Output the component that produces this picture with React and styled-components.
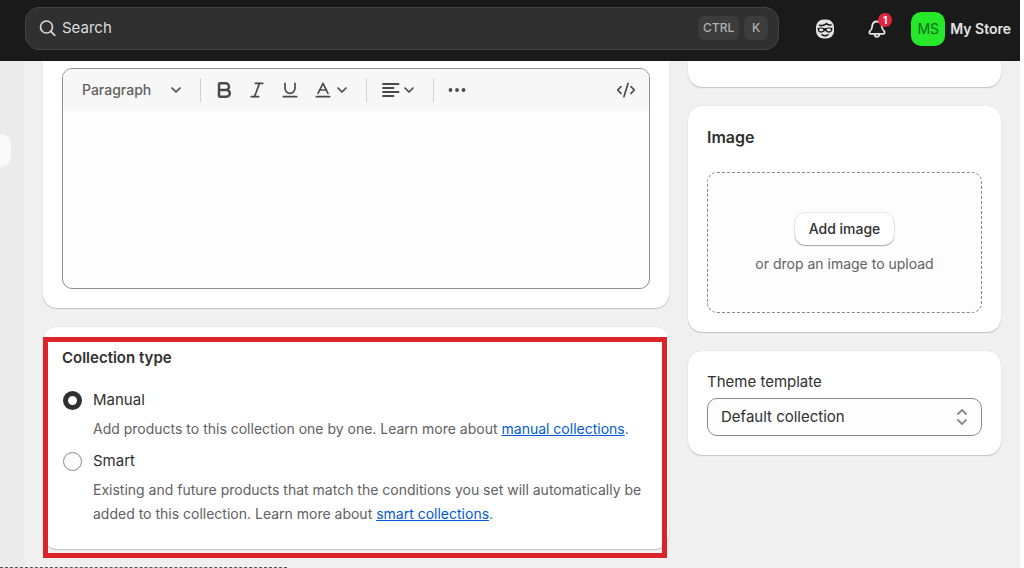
import { useState } from "react";
import styled, { createGlobalStyle } from "styled-components";
import { Baseline, Bold, CodeXml, Italic, Underline } from "lucide-react";

const GlobalStyle = createGlobalStyle`
  * {
    box-sizing: border-box;
  }

  body {
    margin: 0;
    background: #fff;
    color: #303030;
    font-family: Inter, "Liberation Sans", sans-serif;
    font-size: 15px;
    font-optical-sizing: none;
    line-height: 24px;
    overflow: hidden;
  }

  button,
  input,
  select,
  textarea {
    font: inherit;
    font-optical-sizing: none;
    color: inherit;
  }
`;

const Shell = styled.div`
  display: flex;
  flex-direction: column;
  height: 100vh;
  margin-right: 4px;
  background: #f0f0f0;
`;

/* top bar */

const TopBar = styled.header`
  display: flex;
  align-items: center;
  flex: none;
  height: 61px;
  padding: 0 9px 4px 25px;
  background: #1a1a1a;
  color: #e3e3e3;
`;

const SearchBox = styled.label`
  display: flex;
  align-items: center;
  flex: 1;
  gap: 5px;
  height: 43px;
  padding: 0 10px 1px 13px;
  border: 1px solid #444;
  border-radius: 14px;
  background: #303030;
`;

const SearchInput = styled.input`
  flex: 1;
  min-width: 0;
  padding: 0;
  border: 0;
  outline: 0;
  background: transparent;
  font-size: 15px;

  &::placeholder {
    color: #dcdcdc;
    opacity: 1;
  }
`;

const Key = styled.kbd`
  padding: 0 5px;
  min-width: 24px;
  border-radius: 6px;
  background: #3c3c3c;
  color: #b0b0b0;
  font: 500 12px/24px Inter, "Liberation Sans", sans-serif;
  text-align: center;
`;

const Actions = styled.div`
  display: flex;
  align-items: center;
  gap: 24px;
  padding-left: 32px;
`;

const IconButton = styled.button`
  position: relative;
  display: grid;
  place-items: center;
  width: 28px;
  height: 28px;
  padding: 0;
  border: 0;
  background: transparent;
`;

const Badge = styled.span`
  position: absolute;
  top: -2px;
  right: -1px;
  width: 14px;
  height: 14px;
  border-radius: 50%;
  background: #e0243f;
  color: #fff;
  font-size: 10px;
  font-weight: 700;
  line-height: 14px;
`;

const StoreButton = styled.button`
  display: flex;
  align-items: center;
  gap: 5px;
  margin-left: -4px;
  padding: 0;
  border: 0;
  background: transparent;
  font-size: 14px;
  font-weight: 600;
  white-space: nowrap;
`;

const Avatar = styled.span`
  width: 34px;
  height: 34px;
  border-radius: 10px;
  background: #25e82b;
  color: #136c1b;
  font-size: 14px;
  font-weight: 400;
  line-height: 34px;
`;

/* page */

const Body = styled.div`
  display: flex;
  flex: 1;
  min-height: 0;
`;

const NavRail = styled.nav`
  flex: none;
  width: 24px;
  padding-top: 73px;
  background: #ebebeb;
`;

const NavCurrent = styled.div`
  width: 11px;
  height: 33px;
  border-radius: 0 10px 10px 0;
  background: #fafafa;
`;

const Columns = styled.main`
  display: grid;
  grid-template-columns: 2fr 1fr;
  align-items: start;
  flex: 1;
  gap: 19px;
  padding: 0 19px;
`;

const Column = styled.div`
  display: flex;
  flex-direction: column;
  gap: 19px;
  min-width: 0;
`;

const Card = styled.section`
  position: relative;
  padding: ${({ $cut }) => ($cut ? "7px 19px 19px" : "19px")};
  border-radius: ${({ $cut }) => ($cut ? "0 0 14px 14px" : "14px")};
  background: #fff;
  box-shadow: 0 1px 1px rgba(0, 0, 0, 0.18), 0 0 1px rgba(0, 0, 0, 0.16);
`;

const CardTitle = styled.h2`
  margin: 0;
  font-size: ${({ $large }) => ($large ? "16px" : "15px")};
  font-weight: 600;
  line-height: 24px;
`;

/* description editor */

const Editor = styled.div`
  overflow: hidden;
  border: 1px solid #8f8f8f;
  border-radius: 10px;
  background: #fdfdfd;
`;

const Toolbar = styled.div`
  display: flex;
  align-items: center;
  height: 42px;
  padding: 0 13px 0 19px;
  background: #f7f7f7;
  color: #4a4a4a;
`;

const Tool = styled.button`
  display: flex;
  align-items: center;
  justify-content: center;
  gap: 4px;
  min-width: 20px;
  height: 28px;
  margin-right: 13px;
  padding: 0;
  border: 0;
  background: transparent;
`;

const BlockTool = styled(Tool)`
  gap: 20px;
  margin-right: 19px;
  font-size: 14px;
  font-weight: 500;
  color: #616161;
`;

const MenuTool = styled(Tool)`
  margin-right: 19px;
`;

const CodeTool = styled(Tool)`
  margin: 0 0 0 auto;
`;

const Divider = styled.span`
  width: 1px;
  height: 24px;
  margin-right: 13px;
  background: #d0d0d0;
`;

const EditorText = styled.textarea`
  display: block;
  width: 100%;
  height: 177px;
  padding: 12px 19px;
  border: 0;
  outline: 0;
  resize: none;
  background: transparent;
`;

/* collection type */

const Highlight = styled.div`
  position: absolute;
  inset: 10px 2px -9px 0;
  border: 5px solid #dc2329;
  pointer-events: none;
`;

const Options = styled.div`
  display: grid;
  gap: 8px;
  padding: 18px 0 4px;
`;

const Option = styled.div`
  display: grid;
  grid-template-columns: 20px 1fr;
  column-gap: 11px;
  row-gap: 5px;
  align-items: center;
`;

const Radio = styled.input`
  appearance: none;
  justify-self: end;
  width: 19px;
  height: 19px;
  margin: 0;
  border: 1px solid #8a8a8a;
  border-radius: 50%;
  background: #fdfdfd;

  &:checked {
    border: 5px solid #303030;
    background: #fff;
  }
`;

const OptionLabel = styled.label`
  font-size: 15px;
`;

const Help = styled.p`
  grid-column: 2;
  margin: 0;
  font-size: 14px;
  color: #616161;

  a {
    color: #005bd3;
  }
`;

/* side column */

const DropZone = styled.div`
  display: flex;
  flex-direction: column;
  align-items: center;
  justify-content: center;
  gap: 7px;
  height: 141px;
  margin-top: 23px;
  padding-top: 3px;
  border: 1px dashed #8a8a8a;
  border-radius: 10px;
  background: #fdfdfd;
  font-size: 14px;
  color: #616161;
`;

const AddButton = styled.button`
  height: 32px;
  padding: 0 14px;
  border: 0;
  border-radius: 10px;
  background: #fff;
  color: #303030;
  font-weight: 500;
  box-shadow: 0 1px 1px rgba(0, 0, 0, 0.3), 0 0 1px 1px rgba(0, 0, 0, 0.08);
`;

const FieldLabel = styled.label`
  display: block;
  margin-bottom: 4px;
`;

const SelectWrap = styled.div`
  display: grid;
  align-items: center;

  > * {
    grid-area: 1 / 1;
  }

  svg {
    justify-self: end;
    margin-right: 14px;
    pointer-events: none;
  }
`;

const Select = styled.select`
  appearance: none;
  width: 100%;
  height: 38px;
  padding: 0 13px;
  border: 1px solid #8a8a8a;
  border-radius: 10px;
  background: #fdfdfd;
`;

const StatusLine = styled.div`
  position: fixed;
  bottom: 0;
  left: 0;
  width: 28%;
  border-bottom: 1px dashed #555;
`;

const Chevron = () => (
  <svg width="10" height="6" viewBox="0 0 10 6" fill="none" stroke="#4a4a4a" strokeWidth="1.7" strokeLinecap="round" strokeLinejoin="round">
    <path d="M1 1l4 4 4-4" />
  </svg>
);

const SearchIcon = () => (
  <svg width="18" height="18" viewBox="0 0 18 18" fill="none" stroke="#d6d6d6" strokeWidth="1.7" strokeLinecap="round">
    <circle cx="7.5" cy="8" r="6" />
    <path d="M11.8 12.3l4 4" />
  </svg>
);

const FaceIcon = () => (
  <svg width="20" height="20" viewBox="0 0 20 20">
    <rect x="1" y="0.5" width="18" height="19" rx="7.5" fill="#e3e3e3" />
    <path d="M4.5 6.300c3.500 1 5.500-.3 7.200-1.600 1 1.100 2.500 1.500 4.300 1.300" fill="none" stroke="#1a1a1a" strokeWidth="1.600" strokeLinecap="round" />
    <path d="M2.500 9c2.300-.9 4.800-.8 7.500.3 2.700-1.100 5.200-1.200 7.500-.3 0 2.900-1.200 4.700-3.300 4.700-1.800 0-3-.8-4.200-1.900-1.200 1.100-2.400 1.900-4.200 1.900C3.700 13.700 2.500 11.900 2.500 9z" fill="#1a1a1a" />
    <ellipse cx="6.200" cy="10.900" rx="2.200" ry="1.400" fill="#e3e3e3" />
    <ellipse cx="13.800" cy="10.900" rx="2.200" ry="1.400" fill="#e3e3e3" />
    <path d="M7 15.700c1.800 1.300 4.200 1.300 6 0" fill="none" stroke="#1a1a1a" strokeWidth="1.500" strokeLinecap="round" />
  </svg>
);

const BellIcon = () => (
  <svg width="20" height="20" viewBox="0 0 20 20" fill="none" stroke="#e3e3e3" strokeWidth="1.8" strokeLinecap="round" strokeLinejoin="round">
    <path d="M10 2.500c-3 0-4.700 2.200-4.800 4.800-.1 2.500-.8 3.500-2.200 4.700-1.200 1.200-.8 2.900.7 2.900h12.600c1.500 0 1.900-1.700.7-2.900-1.400-1.200-2.100-2.200-2.200-4.700C14.700 4.700 13 2.500 10 2.500z" />
    <path d="M7.600 15.200c0 3.600 4.800 3.600 4.800 0" />
  </svg>
);

const AlignIcon = () => (
  <svg width="20" height="16" viewBox="-2 0 20 16" stroke="#4a4a4a" strokeWidth="1.8" strokeLinecap="round">
    <path d="M1 2h15.500M1 6h10.500M1 10h15.500M1 14h10.500" />
  </svg>
);

const DotsIcon = () => (
  <svg width="18" height="6" viewBox="0 0 18 6" fill="#4a4a4a">
    <circle cx="2.500" cy="3" r="1.900" />
    <circle cx="9" cy="3" r="1.900" />
    <circle cx="15.500" cy="3" r="1.900" />
  </svg>
);

const SortIcon = () => (
  <svg width="12" height="18" viewBox="0 0 12 18" fill="none" stroke="#8a8a8a" strokeWidth="1.8" strokeLinecap="round" strokeLinejoin="round">
    <path d="M2 6l4-4 4 4M2 12l4 4 4-4" />
  </svg>
);

export default function App() {
  const [type, setType] = useState("manual");

  return (
    <>
      <GlobalStyle />
      <Shell>
        <TopBar>
          <SearchBox>
            <SearchIcon />
            <SearchInput type="text" placeholder="Search" aria-label="Search" />
            <Key>CTRL</Key>
            <Key>K</Key>
          </SearchBox>
          <Actions>
            <IconButton aria-label="Assistant">
              <FaceIcon />
            </IconButton>
            <IconButton aria-label="Notifications">
              <BellIcon />
              <Badge>1</Badge>
            </IconButton>
            <StoreButton>
              <Avatar>MS</Avatar>
              My Store
            </StoreButton>
          </Actions>
        </TopBar>

        <Body>
          <NavRail>
            <NavCurrent />
          </NavRail>

          <Columns>
            <Column>
              <Card $cut>
                <Editor>
                  <Toolbar>
                    <BlockTool>
                      Paragraph <Chevron />
                    </BlockTool>
                    <Divider />
                    <Tool aria-label="Bold">
                      <Bold size={20} strokeWidth={3} />
                    </Tool>
                    <Tool aria-label="Italic">
                      <Italic size={20} />
                    </Tool>
                    <Tool aria-label="Underline">
                      <Underline size={20} />
                    </Tool>
                    <MenuTool aria-label="Text color">
                      <Baseline size={20} />
                      <Chevron />
                    </MenuTool>
                    <Divider />
                    <MenuTool aria-label="Alignment">
                      <AlignIcon />
                      <Chevron />
                    </MenuTool>
                    <Divider />
                    <Tool aria-label="More">
                      <DotsIcon />
                    </Tool>
                    <CodeTool aria-label="Show HTML">
                      <CodeXml size={20} />
                    </CodeTool>
                  </Toolbar>
                  <EditorText aria-label="Description" />
                </Editor>
              </Card>

              <Card>
                <CardTitle>Collection type</CardTitle>
                <Options>
                  <Option>
                    <Radio
                      type="radio"
                      id="type-manual"
                      name="type"
                      checked={type === "manual"}
                      onChange={() => setType("manual")}
                    />
                    <OptionLabel htmlFor="type-manual">Manual</OptionLabel>
                    <Help>
                      Add products to this collection one by one. Learn more about <a href="#manual">manual collections</a>.
                    </Help>
                  </Option>
                  <Option>
                    <Radio
                      type="radio"
                      id="type-smart"
                      name="type"
                      checked={type === "smart"}
                      onChange={() => setType("smart")}
                    />
                    <OptionLabel htmlFor="type-smart">Smart</OptionLabel>
                    <Help>
                      Existing and future products that match the conditions you set will automatically be added to this
                      collection. Learn more about <a href="#smart">smart collections</a>.
                    </Help>
                  </Option>
                </Options>
                <Highlight />
              </Card>
            </Column>

            <Column>
              <Card $cut />
              <Card>
                <CardTitle $large>Image</CardTitle>
                <DropZone>
                  <AddButton>Add image</AddButton>
                  or drop an image to upload
                </DropZone>
              </Card>
              <Card>
                <FieldLabel htmlFor="template">Theme template</FieldLabel>
                <SelectWrap>
                  <Select id="template">
                    <option>Default collection</option>
                  </Select>
                  <SortIcon />
                </SelectWrap>
              </Card>
            </Column>
          </Columns>
        </Body>
      </Shell>
      <StatusLine />
    </>
  );
}
